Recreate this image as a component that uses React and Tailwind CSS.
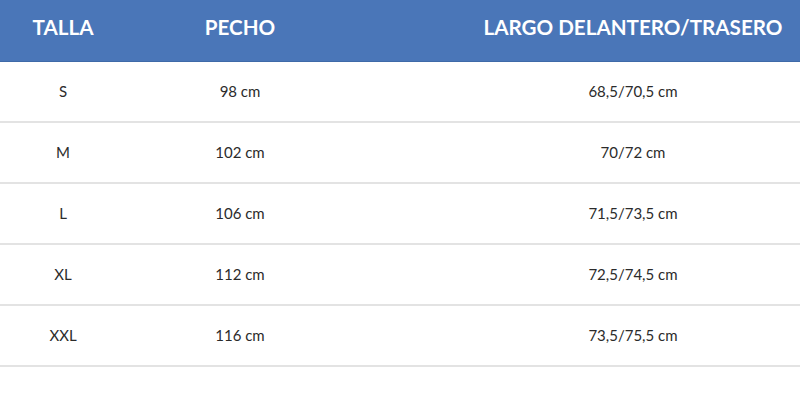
export default function App() {
  const rows = [
    ["S", "98 cm", "68,5/70,5 cm"],
    ["M", "102 cm", "70/72 cm"],
    ["L", "106 cm", "71,5/73,5 cm"],
    ["XL", "112 cm", "72,5/74,5 cm"],
    ["XXL", "116 cm", "73,5/75,5 cm"],
  ];
  return (
    <div className="w-[800px] h-[401px] bg-white" style={{ fontFamily: "Lato, 'Open Sans', sans-serif" }}>
      <div className="h-[62px] bg-[#4a76b8] border-b border-[#3f6aa8] flex items-center text-white font-bold text-[20.6px] pb-[6px]">
        <div className="w-[126px] text-center">TALLA</div>
        <div className="w-[228px] text-center">PECHO</div>
        <div className="flex-1 text-center pl-[112px]">LARGO DELANTERO/TRASERO</div>
      </div>
      {rows.map((r) => (
        <div key={r[0]} className="h-[61px] border-b-2 border-[#e3e3e3] flex items-center text-[15px] text-[#2b2b2b]">
          <div className="w-[126px] text-center">{r[0]}</div>
          <div className="w-[228px] text-center">{r[1]}</div>
          <div className="flex-1 text-center pl-[112px]">{r[2]}</div>
        </div>
      ))}
    </div>
  );
}
